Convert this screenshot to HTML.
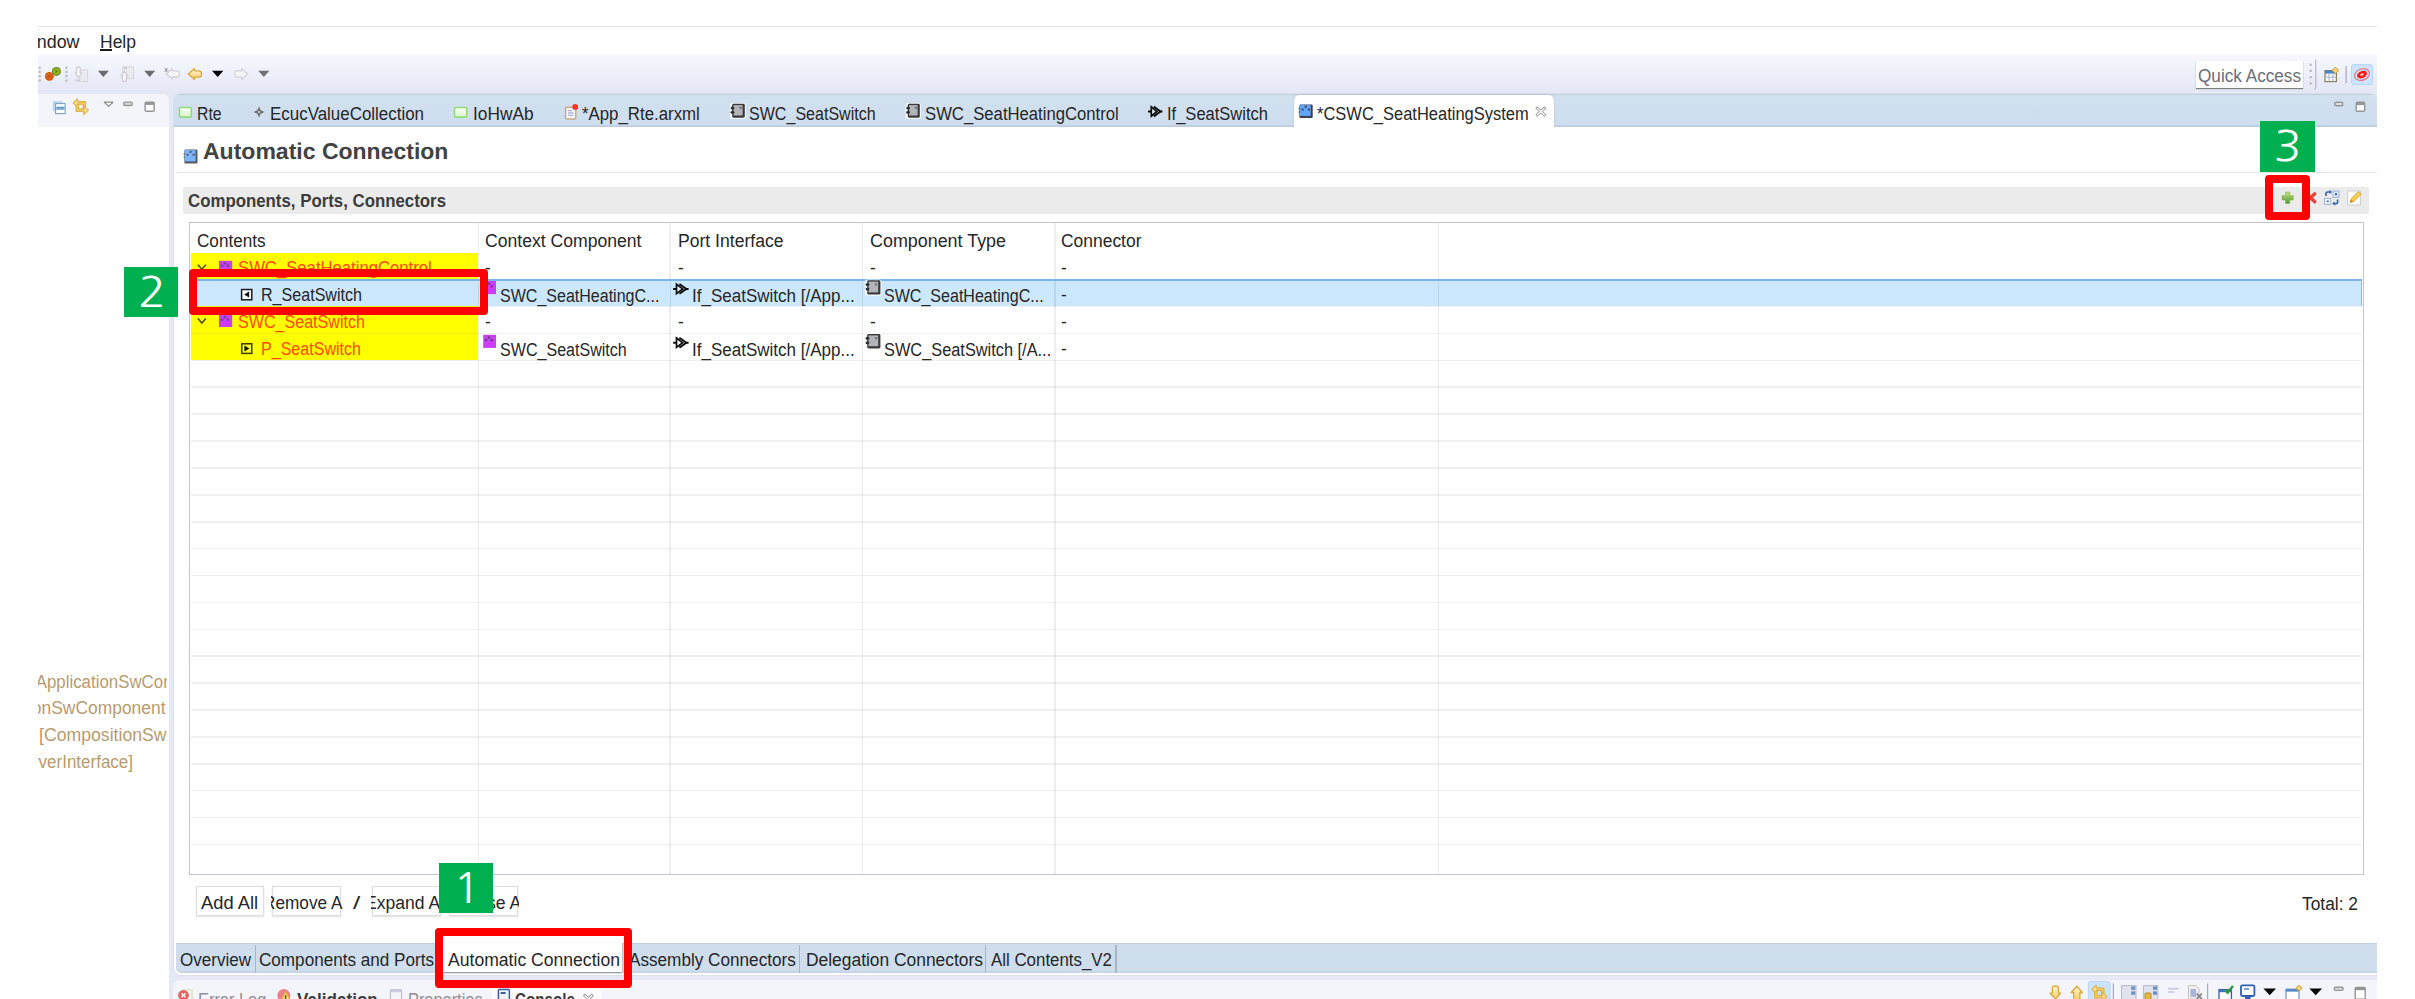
<!DOCTYPE html>
<html lang="en"><head><meta charset="utf-8"><title>Automatic Connection</title>
<style>
html,body{margin:0;padding:0;background:#fff}
body{width:2415px;height:999px;overflow:hidden;font-family:"Liberation Sans",sans-serif}
#root{position:relative;width:2415px;height:999px;overflow:hidden;background:#fff}
#root div,#root span.t,#root svg{position:absolute}
.t{white-space:pre;line-height:1;transform-origin:0 0;display:block}
.clip{overflow:hidden}
.clip .t{position:absolute}
</style></head><body><div id="root">
<div style="left:38.00px;top:25.70px;width:2339.00px;height:1.10px;z-index:1;background:#e4e4e4"></div>
<div style="left:38.00px;top:53.50px;width:2339.00px;height:945.50px;z-index:1;background:#e5e8f6"></div>
<div style="left:38.00px;top:53.50px;width:2339.00px;height:40.70px;z-index:1;background:linear-gradient(#f6f8fd 0%,#eef1fa 45%,#e3e6f4 100%)"></div>
<div style="left:38.00px;top:94.00px;width:131.00px;height:905.00px;z-index:1;background:#fff;border-top-right-radius:7px"></div>
<div style="left:38.00px;top:94.00px;width:131.00px;height:32.50px;z-index:1;background:#f4f5fb;border-top-right-radius:7px"></div>
<div style="left:174.00px;top:94.20px;width:2203.00px;height:881.00px;z-index:1;background:#fff;border-radius:7px 6px 0 7px;box-shadow:0 0 0 0.8px #d9dce8"></div>
<div style="left:174.00px;top:93.90px;width:2203.00px;height:32.80px;z-index:1;background:linear-gradient(#c6cbd9 0,#c9cfdd 2.5%,#d1e0ef 4.5%,#cfdeee 93%,#becce0 96.5%,#becce0 100%);border-radius:6px 6px 0 0"></div>
<div style="left:1294.20px;top:95.20px;width:259.40px;height:32.00px;z-index:2;background:#fff;border-radius:5px 5px 0 0;box-shadow:0 0 1.5px rgba(120,130,160,.55)"></div>
<div style="left:1293.00px;top:126.90px;width:263.00px;height:2.10px;z-index:2;background:#fff"></div>
<div style="left:177.00px;top:171.60px;width:2200.00px;height:1.20px;z-index:1;background:#e5e5e5"></div>
<div style="left:183.30px;top:186.60px;width:2185.70px;height:27.40px;z-index:1;background:#ebebeb;border-radius:2px"></div>
<div style="left:188.80px;top:221.80px;width:2175.40px;height:653.40px;z-index:1;background:#fff;border:1.3px solid #c2c5cd;box-sizing:border-box"></div>
<div style="left:191.40px;top:253.00px;width:287.00px;height:107.18px;z-index:1;background:#ffff00"></div>
<div style="left:191.00px;top:278.89px;width:2171.30px;height:1.60px;z-index:1;background:rgba(120,120,120,.115)"></div>
<div style="left:191.00px;top:305.79px;width:2171.30px;height:1.60px;z-index:1;background:rgba(120,120,120,.115)"></div>
<div style="left:191.00px;top:332.69px;width:2171.30px;height:1.60px;z-index:1;background:rgba(120,120,120,.115)"></div>
<div style="left:191.00px;top:359.58px;width:2171.30px;height:1.60px;z-index:1;background:rgba(120,120,120,.115)"></div>
<div style="left:191.00px;top:386.47px;width:2171.30px;height:1.60px;z-index:1;background:rgba(120,120,120,.115)"></div>
<div style="left:191.00px;top:413.37px;width:2171.30px;height:1.60px;z-index:1;background:rgba(120,120,120,.115)"></div>
<div style="left:191.00px;top:440.26px;width:2171.30px;height:1.60px;z-index:1;background:rgba(120,120,120,.115)"></div>
<div style="left:191.00px;top:467.16px;width:2171.30px;height:1.60px;z-index:1;background:rgba(120,120,120,.115)"></div>
<div style="left:191.00px;top:494.06px;width:2171.30px;height:1.60px;z-index:1;background:rgba(120,120,120,.115)"></div>
<div style="left:191.00px;top:520.95px;width:2171.30px;height:1.60px;z-index:1;background:rgba(120,120,120,.115)"></div>
<div style="left:191.00px;top:547.85px;width:2171.30px;height:1.60px;z-index:1;background:rgba(120,120,120,.115)"></div>
<div style="left:191.00px;top:574.74px;width:2171.30px;height:1.60px;z-index:1;background:rgba(120,120,120,.115)"></div>
<div style="left:191.00px;top:601.63px;width:2171.30px;height:1.60px;z-index:1;background:rgba(120,120,120,.115)"></div>
<div style="left:191.00px;top:628.53px;width:2171.30px;height:1.60px;z-index:1;background:rgba(120,120,120,.115)"></div>
<div style="left:191.00px;top:655.43px;width:2171.30px;height:1.60px;z-index:1;background:rgba(120,120,120,.115)"></div>
<div style="left:191.00px;top:682.32px;width:2171.30px;height:1.60px;z-index:1;background:rgba(120,120,120,.115)"></div>
<div style="left:191.00px;top:709.22px;width:2171.30px;height:1.60px;z-index:1;background:rgba(120,120,120,.115)"></div>
<div style="left:191.00px;top:736.11px;width:2171.30px;height:1.60px;z-index:1;background:rgba(120,120,120,.115)"></div>
<div style="left:191.00px;top:763.01px;width:2171.30px;height:1.60px;z-index:1;background:rgba(120,120,120,.115)"></div>
<div style="left:191.00px;top:789.90px;width:2171.30px;height:1.60px;z-index:1;background:rgba(120,120,120,.115)"></div>
<div style="left:191.00px;top:816.80px;width:2171.30px;height:1.60px;z-index:1;background:rgba(120,120,120,.115)"></div>
<div style="left:191.00px;top:843.69px;width:2171.30px;height:1.60px;z-index:1;background:rgba(120,120,120,.115)"></div>
<div style="left:477.90px;top:223.30px;width:1.60px;height:650.70px;z-index:1;background:rgba(120,120,120,.125)"></div>
<div style="left:669.40px;top:223.30px;width:1.60px;height:650.70px;z-index:1;background:rgba(120,120,120,.125)"></div>
<div style="left:861.70px;top:223.30px;width:1.60px;height:650.70px;z-index:1;background:rgba(120,120,120,.125)"></div>
<div style="left:1054.20px;top:223.30px;width:1.60px;height:650.70px;z-index:1;background:rgba(120,120,120,.125)"></div>
<div style="left:1437.60px;top:223.30px;width:1.60px;height:650.70px;z-index:1;background:rgba(120,120,120,.125)"></div>
<div style="left:191.00px;top:279.09px;width:2171.20px;height:27.40px;z-index:1;background:#cce8ff;border-top:2px solid #7ab5e9;border-right:1.7px solid #86bdec;box-sizing:border-box"></div>
<div style="left:478.10px;top:280.69px;width:1.20px;height:25.90px;z-index:1;background:rgba(120,150,190,.22)"></div>
<div style="left:669.60px;top:280.69px;width:1.20px;height:25.90px;z-index:1;background:rgba(120,150,190,.22)"></div>
<div style="left:861.90px;top:280.69px;width:1.20px;height:25.90px;z-index:1;background:rgba(120,150,190,.22)"></div>
<div style="left:1054.40px;top:280.69px;width:1.20px;height:25.90px;z-index:1;background:rgba(120,150,190,.22)"></div>
<div style="left:1437.80px;top:280.69px;width:1.20px;height:25.90px;z-index:1;background:rgba(120,150,190,.22)"></div>
<div style="left:195.60px;top:885.60px;width:68.60px;height:30.80px;z-index:1;background:#fff;border:1px solid #dedede;box-sizing:border-box;box-shadow:0 1px 1.5px rgba(0,0,0,.13)"></div>
<div style="left:271.80px;top:885.60px;width:69.60px;height:30.80px;z-index:1;background:#fff;border:1px solid #dedede;box-sizing:border-box;box-shadow:0 1px 1.5px rgba(0,0,0,.13)"></div>
<div style="left:372.00px;top:885.60px;width:68.70px;height:30.80px;z-index:1;background:#fff;border:1px solid #dedede;box-sizing:border-box;box-shadow:0 1px 1.5px rgba(0,0,0,.13)"></div>
<div style="left:449.00px;top:885.60px;width:68.80px;height:30.80px;z-index:1;background:#fff;border:1px solid #dedede;box-sizing:border-box;box-shadow:0 1px 1.5px rgba(0,0,0,.13)"></div>
<div style="left:176.00px;top:943.30px;width:2201.00px;height:29.70px;z-index:1;background:linear-gradient(#b9c6d8 0,#cfddec 5%,#cfdeee 90%,#c3d0e2 100%);border-radius:0 0 0 5px"></div>
<div style="left:255.20px;top:944.50px;width:1.20px;height:28.10px;z-index:1;background:#a9b4c6"></div>
<div style="left:799.20px;top:944.50px;width:1.20px;height:28.10px;z-index:1;background:#a9b4c6"></div>
<div style="left:984.70px;top:944.50px;width:1.20px;height:28.10px;z-index:1;background:#a9b4c6"></div>
<div style="left:1115.40px;top:944.50px;width:1.20px;height:28.10px;z-index:1;background:#a9b4c6"></div>
<div style="left:443.40px;top:942.50px;width:178.90px;height:29.90px;z-index:2;background:#fff;box-shadow:0 1px 2px rgba(0,0,0,.35)"></div>
<div style="left:173.30px;top:980.00px;width:2203.70px;height:19.00px;z-index:1;background:#f4f5fb;border-radius:7px 0 0 0"></div>
<div style="left:492.30px;top:988.20px;width:109.70px;height:10.80px;z-index:1;background:#fbfbfe;border-radius:4px 4px 0 0"></div>
<div style="left:2195.50px;top:60.50px;width:107.50px;height:27.80px;z-index:1;background:#fff;box-shadow:0 1px 1px rgba(0,0,0,.45)"></div>
<div style="left:2351.30px;top:64.00px;width:21.50px;height:20.70px;z-index:1;background:#cce4ff;border:1px solid #b3d6fb;border-radius:3px;box-sizing:border-box"></div>
<svg width="2415" height="999" viewBox="0 0 2415 999" style="left:0;top:0;z-index:2"><defs><linearGradient id="gg" x1="0" y1="0" x2="0" y2="1"><stop offset="0" stop-color="#fbfffa"/><stop offset="1" stop-color="#d6f3cb"/></linearGradient><linearGradient id="gy" x1="0" y1="0" x2="0" y2="1"><stop offset="0" stop-color="#fff8d6"/><stop offset="1" stop-color="#f6cf62"/></linearGradient><linearGradient id="gp" x1="0" y1="0" x2="0" y2="1"><stop offset="0" stop-color="#c8e27a"/><stop offset="1" stop-color="#4f9a32"/></linearGradient><radialGradient id="gr"><stop offset="0" stop-color="#b94a10"/><stop offset=".45" stop-color="#e0661c"/><stop offset="1" stop-color="#c4520f"/></radialGradient><radialGradient id="gn"><stop offset="0" stop-color="#a5c42c"/><stop offset=".6" stop-color="#8fb022"/><stop offset="1" stop-color="#5f8212"/></radialGradient></defs>
<rect x="38.6" y="66.6" width="2.2" height="2.2" fill="#bdbcb6"/><rect x="38.6" y="70.8" width="2.2" height="2.2" fill="#bdbcb6"/><rect x="38.6" y="75.0" width="2.2" height="2.2" fill="#bdbcb6"/><rect x="38.6" y="79.5" width="2.2" height="2.2" fill="#bdbcb6"/>
<circle cx="49.4" cy="76.4" r="4.4" fill="url(#gr)"/>
<circle cx="56.4" cy="71.4" r="4.5" fill="url(#gn)"/>
<path d="M55.3 69.6V73.2L58.4 71.4Z" fill="#5a7a10" opacity=".8"/>
<rect x="65.4" y="66.6" width="2.2" height="2.2" fill="#bdbcb6"/><rect x="65.4" y="70.8" width="2.2" height="2.2" fill="#bdbcb6"/><rect x="65.4" y="75.0" width="2.2" height="2.2" fill="#bdbcb6"/><rect x="65.4" y="79.5" width="2.2" height="2.2" fill="#bdbcb6"/>
<rect x="79.8" y="69.9" width="7.8" height="11.6" fill="#e9e9ee" stroke="#d6d6dc" stroke-width="1"/>
<path d="M78.4 77.8L75.2 72.9H76.5V68.9Q76.5 67.0 78.4 67.0Q80.3 67.0 80.3 68.9V72.9H81.6Z" fill="#f6f6f8" stroke="#cfcfd6" stroke-width="1.3" stroke-linejoin="round"/>
<rect x="75.6" y="79.6" width="4.4" height="1.8" fill="#c9c9cf"/>
<path d="M97.9 70.8H108.9L103.4 76.9Z" fill="#6c6c70"/>
<rect x="122.6" y="66.9" width="11" height="11.6" fill="#e9e9ee" stroke="#d6d6dc" stroke-width="1"/>
<rect x="123.4" y="67.4" width="3.6" height="1.6" fill="#c9c9cf"/>
<path d="M124.4 71.2L121.0 75.8H122.4V79.5Q122.4 81.4 124.4 81.4Q126.4 81.4 126.4 79.5V75.8H127.8Z" fill="#f6f6f8" stroke="#cfcfd6" stroke-width="1.3" stroke-linejoin="round"/>
<path d="M144.2 70.8H155.2L149.7 76.9Z" fill="#6c6c70"/>
<path d="M166.2 73.9L172.2 68.8V70.8H177.0Q179.4 70.8 179.4 73.9Q179.4 77.0 177.0 77.0H172.2V79.0Z" fill="#f4f4f6" stroke="#d2d2d8" stroke-width="1.3" stroke-linejoin="round"/>
<path d="M164.6 68.4l3.2 3.2m0-3.2l-3.2 3.2m1.6-3.8v4.4" stroke="#9a9a9a" stroke-width="1"/>
<path d="M188.4 74.0L194.4 68.6V70.8H199.1Q201.5 70.8 201.5 74.0Q201.5 77.2 199.1 77.2H194.4V79.4Z" fill="url(#gy)" stroke="#d9a93e" stroke-width="1.3" stroke-linejoin="round"/>
<path d="M212.0 70.8H223.4L217.7 77.0Z" fill="#000"/>
<path d="M247.7 74.0L241.7 68.6V70.8H237.0Q234.6 70.8 234.6 74.0Q234.6 77.2 237.0 77.2H241.7V79.4Z" fill="#f4f4f6" stroke="#d4d4da" stroke-width="1.3" stroke-linejoin="round"/>
<path d="M258.2 70.8H269.4L263.8 77.0Z" fill="#707074"/>
<rect x="2309.7" y="63.7" width="2.2" height="2.2" fill="#b9b9b9"/><rect x="2309.7" y="69.7" width="2.2" height="2.2" fill="#b9b9b9"/><rect x="2309.7" y="76.1" width="2.2" height="2.2" fill="#b9b9b9"/><rect x="2309.7" y="82.3" width="2.2" height="2.2" fill="#b9b9b9"/>
<path d="M2315.8 59.5V87.5Q2315.8 89 2314.2 89" stroke="#b4b7c8" stroke-width="1.2" fill="none"/>
<rect x="2325" y="70.6" width="11.4" height="11" fill="#f4f6fb" stroke="#8a7d58" stroke-width="1.2"/>
<rect x="2325" y="70.6" width="11.4" height="3" fill="#4f86c6"/>
<path d="M2325 77.2H2336.4M2329 73.6V81.6M2333 73.6V81.6" stroke="#a9b9c9" stroke-width="1"/>
<path d="M2335.4 67.2L2338.6 70.4L2335.4 73.6L2332.2 70.4Z" fill="#f3d57a" stroke="#c79c32" stroke-width="1"/>
<path d="M2346.1 66V83.2" stroke="#a9adbd" stroke-width="1.3"/>
<ellipse cx="2362" cy="74.6" rx="7.6" ry="5.6" fill="none" stroke="#e8707a" stroke-width="1.2" transform="rotate(-18 2362 74.6)"/>
<ellipse cx="2362" cy="74.6" rx="5.2" ry="3.5" fill="#ff1a1a" transform="rotate(-24 2362 74.6)"/>
<ellipse cx="2362" cy="74.6" rx="1.9" ry="1.1" fill="#ffd0d0" transform="rotate(-24 2362 74.6)"/>
<rect x="52.9" y="101.2" width="9.6" height="10" fill="#b9d5ee"/>
<rect x="55.6" y="103.6" width="9.6" height="10" fill="#fff" stroke="#7f9fc9" stroke-width="1.1"/>
<path d="M56.4 107.4H64.6M56.4 109H64.6" stroke="#5c96c9" stroke-width="1.4"/>
<g transform="translate(0 0)"><path d="M72.8 103L77.6 98.6V101.5H85.5V108.6H83V104.3H77.6V107.3Z" fill="#f0c862" stroke="#dcab40" stroke-width=".9" stroke-linejoin="round"/><path d="M88.7 110.2L83.7 105.9V108.9H78.6V104.6H76V111.6H83.7V114.7Z" fill="#f0c862" stroke="#dcab40" stroke-width=".9" stroke-linejoin="round"/><path d="M74.6 103L77 100.8V105.2Z" fill="#fbe9a8"/><path d="M87 110.2L84.6 108V112.4Z" fill="#fbe9a8"/></g>
<path d="M104.4 102.2H112.9L108.6 106.4Z" fill="#fff" stroke="#8f8f8f" stroke-width="1.3" stroke-linejoin="round"/>
<rect x="123.6" y="102.1" width="8.7" height="3.4" rx="1.6" fill="#d9d9d9" stroke="#979797" stroke-width="1.4"/>
<rect x="145.1" y="102.1" width="9.1" height="9.2" rx="1.2" fill="#fff" stroke="#959595" stroke-width="1.4"/><rect x="145.1" y="102.1" width="9.1" height="2.8" fill="#959595"/>
<rect x="179.5" y="107.5" width="11.8" height="9.6" rx="1" fill="url(#gg)" stroke="#92dc78" stroke-width="1.6"/>
<path d="M259 106.4L260.68 110.32L264.6 112L260.68 113.68L259 117.6L257.32 113.68L253.4 112L257.32 110.32Z" fill="#707070"/><circle cx="259" cy="112" r="1.2" fill="#c8c8c8"/>
<rect x="454.5" y="107.5" width="12.3" height="9.6" rx="1" fill="url(#gg)" stroke="#92dc78" stroke-width="1.6"/>
<rect x="565.6" y="107.2" width="10.2" height="11.8" rx="1" fill="#f4f4fc" stroke="#c4b07a" stroke-width="1.5"/>
<path d="M568 110.6H572M568 113H573.4M568 115.4H573.4" stroke="#aab4dc" stroke-width="1.3"/>
<circle cx="575.2" cy="106.9" r="2.9" fill="#ff3030"/>
<rect x="730.0" y="103.0" width="15.8" height="15.9" rx="2" fill="#fff" opacity=".8"/><rect x="732.2" y="103.8" width="12.6" height="13.9" rx="1.4" fill="#3a3a3c"/><rect x="733.5" y="105.1" width="9.1" height="10.4" fill="#b3b3ba"/><ellipse cx="732.5" cy="107.9" rx="1.9" ry="1.5" fill="#2c3030"/><ellipse cx="732.5" cy="112.2" rx="1.9" ry="1.5" fill="#2c3030"/><rect x="739.5" y="106.7" width="2.4" height="2.2" fill="#76767c"/>
<rect x="905.6" y="103.0" width="15.2" height="15.9" rx="2" fill="#fff" opacity=".8"/><rect x="907.8" y="103.8" width="12.0" height="13.9" rx="1.4" fill="#3a3a3c"/><rect x="909.1" y="105.1" width="8.5" height="10.4" fill="#b3b3ba"/><ellipse cx="908.1" cy="107.9" rx="1.9" ry="1.5" fill="#2c3030"/><ellipse cx="908.1" cy="112.2" rx="1.9" ry="1.5" fill="#2c3030"/><rect x="914.8" y="106.7" width="2.4" height="2.2" fill="#76767c"/>
<path d="M1148.0 111.5H1151.4M1159.8 111.5H1162.4" stroke="#0c0c0c" stroke-width="2" fill="none"/><path d="M1151.3 106.8L1156.9 111.5L1151.3 116.2Z" stroke="#0c0c0c" stroke-width="1.7" fill="rgba(255,255,255,.35)" stroke-linejoin="miter"/><path d="M1153.8 106.6L1160.4 111.5L1153.8 116.4" stroke="#0c0c0c" stroke-width="1.9" fill="none" stroke-linejoin="miter"/>
<rect x="1299.4" y="104.5" width="13.3" height="13.4" rx="1.2" fill="#3a4250"/><rect x="1299.8" y="105.1" width="10.9" height="10.8" fill="#62a6ff"/><rect x="1298.6" y="107.8" width="1.4" height="1.6" fill="#3a4250" opacity=".7"/><rect x="1298.6" y="111.2" width="1.4" height="1.6" fill="#3a4250" opacity=".7"/><rect x="1304.6" y="105.7" width="2.3" height="2.1" fill="#3a4250" opacity=".85"/><rect x="1301.4" y="108.5" width="2.3" height="2.1" fill="#3a4250" opacity=".85"/><rect x="1307.7" y="108.5" width="2.3" height="2.1" fill="#3a4250" opacity=".85"/>
<path d="M1537.4 108.4L1544.4 114.8M1544.4 108.4L1537.4 114.8" stroke="#909090" stroke-width="2.9" stroke-linecap="square"/><path d="M1537.4 108.4L1544.4 114.8M1544.4 108.4L1537.4 114.8" stroke="#fff" stroke-width="1.3" stroke-linecap="square"/>
<rect x="2334.6" y="102.3" width="8.4" height="3.4" rx="1.6" fill="#d9d9d9" stroke="#979797" stroke-width="1.4"/>
<rect x="2356.2" y="102.3" width="8.5" height="9.0" rx="1.2" fill="#fff" stroke="#959595" stroke-width="1.4"/><rect x="2356.2" y="102.3" width="8.5" height="2.8" fill="#959595"/>
<rect x="184.4" y="149.5" width="13.1" height="13.9" rx="1.2" fill="#565b63"/><rect x="184.8" y="150.1" width="10.7" height="11.3" fill="#7ab6ff"/><rect x="183.6" y="153.0" width="1.4" height="1.6" fill="#565b63" opacity=".7"/><rect x="183.6" y="156.4" width="1.4" height="1.6" fill="#565b63" opacity=".7"/><rect x="189.5" y="150.8" width="2.3" height="2.1" fill="#565b63" opacity=".85"/><rect x="186.4" y="153.7" width="2.3" height="2.1" fill="#565b63" opacity=".85"/><rect x="192.5" y="153.7" width="2.3" height="2.1" fill="#565b63" opacity=".85"/>
<path d="M2285.5 192.2H2289.7V195.7H2293.2V199.9H2289.7V203.4H2285.5V199.9H2282V195.7H2285.5Z" fill="url(#gp)" stroke="#78ae44" stroke-width=".6" stroke-linejoin="round"/>
<path d="M2306.4 193.8L2314.8 201.8M2314.8 193.8L2306.4 201.8" stroke="#e0433d" stroke-width="3.3" stroke-linecap="round"/>
<rect x="2333" y="191" width="6" height="6.4" fill="#dfe9f6" stroke="#9eb2d2" stroke-width="1"/>
<rect x="2335" y="193" width="2" height="2.4" fill="#3f6fb4"/>
<rect x="2324.4" y="198.4" width="6.4" height="6" fill="#f4f8fd" stroke="#9eb2d2" stroke-width="1"/>
<rect x="2326.6" y="200.6" width="2.2" height="1.6" fill="#3f6fb4"/>
<path d="M2326 196V193.4Q2326 192 2327.6 192H2330.4" stroke="#3765b0" stroke-width="1.7" fill="none"/><path d="M2329.6 189.8L2332 192L2329.6 194.2Z" fill="#3765b0"/>
<path d="M2337.6 199.6V202.2Q2337.6 203.6 2336 203.6H2334" stroke="#3765b0" stroke-width="1.7" fill="none"/><path d="M2334.6 201.4L2332.2 203.6L2334.6 205.8Z" fill="#3765b0"/>
<rect x="2347.6" y="191" width="13" height="14" rx="1" fill="#fff" stroke="#cfcfcf" stroke-width="1.1"/>
<path d="M2350.2 202.6L2351.4 198.6L2358.4 191.4L2361.2 194L2354.2 201.2Z" fill="#f7cf52" stroke="#d9a032" stroke-width=".9" stroke-linejoin="round"/>
<path d="M2350.2 202.6L2351.2 199.4L2353.4 201.6Z" fill="#c98038"/>
<path d="M197.9 264.7L201.9 269.2L205.8 264.7" stroke="#4b4b10" stroke-width="1.5" fill="none"/>
<rect x="219.0" y="260.8" width="13.2" height="12.4" fill="#cb3cfb"/><rect x="223.8" y="262.3" width="2.3" height="2.1" fill="#5a4a6a" opacity=".85"/><rect x="220.9" y="264.8" width="2.3" height="2.1" fill="#5a4a6a" opacity=".85"/><rect x="226.7" y="264.8" width="2.3" height="2.1" fill="#5a4a6a" opacity=".85"/>
<path d="M197.9 318.5L201.9 323.0L205.8 318.5" stroke="#4b4b10" stroke-width="1.5" fill="none"/>
<rect x="219.0" y="314.6" width="13.2" height="12.4" fill="#cb3cfb"/><rect x="223.8" y="316.1" width="2.3" height="2.1" fill="#5a4a6a" opacity=".85"/><rect x="220.9" y="318.6" width="2.3" height="2.1" fill="#5a4a6a" opacity=".85"/><rect x="226.7" y="318.6" width="2.3" height="2.1" fill="#5a4a6a" opacity=".85"/>
<rect x="241.6" y="289.5" width="10.2" height="10.3" fill="#f4faff" stroke="#1c1c1c" stroke-width="1.5"/><path d="M249.1 291.6V297.6L244.1 294.6Z" fill="#111"/>
<rect x="241.8" y="343.8" width="10.0" height="9.6" fill="#ffff20" stroke="#3c3c00" stroke-width="1.5"/><path d="M244.4 345.6V351.6L249.4 348.6Z" fill="#111"/>
<rect x="483.2" y="281.0" width="12.8" height="13.1" fill="#cb3cfb"/><rect x="487.8" y="282.6" width="2.3" height="2.1" fill="#5a3a6a" opacity=".85"/><rect x="485.0" y="285.2" width="2.3" height="2.1" fill="#5a3a6a" opacity=".85"/><rect x="490.6" y="285.2" width="2.3" height="2.1" fill="#5a3a6a" opacity=".85"/>
<path d="M673.2 288.9H676.6M685.8 288.9H688.6" stroke="#0c0c0c" stroke-width="2" fill="none"/><path d="M676.5 284.2L682.7 288.9L676.5 293.6Z" stroke="#0c0c0c" stroke-width="1.7" fill="rgba(255,255,255,.35)" stroke-linejoin="miter"/><path d="M679.4 284.0L686.4 288.9L679.4 293.8" stroke="#0c0c0c" stroke-width="1.9" fill="none" stroke-linejoin="miter"/>
<rect x="865.0" y="279.5" width="16.4" height="16.3" rx="2" fill="#fff" opacity=".8"/><rect x="867.2" y="280.3" width="13.2" height="14.3" rx="1.4" fill="#3a3a3c"/><rect x="868.5" y="281.6" width="9.7" height="10.8" fill="#b3b3ba"/><ellipse cx="867.5" cy="284.5" rx="1.9" ry="1.5" fill="#2c3030"/><ellipse cx="867.5" cy="288.9" rx="1.9" ry="1.5" fill="#2c3030"/><rect x="874.9" y="283.3" width="2.4" height="2.2" fill="#76767c"/>
<rect x="483.2" y="334.8" width="12.8" height="13.1" fill="#cb3cfb"/><rect x="487.8" y="336.4" width="2.3" height="2.1" fill="#5a3a6a" opacity=".85"/><rect x="485.0" y="339.0" width="2.3" height="2.1" fill="#5a3a6a" opacity=".85"/><rect x="490.6" y="339.0" width="2.3" height="2.1" fill="#5a3a6a" opacity=".85"/>
<path d="M673.2 342.7H676.6M685.8 342.7H688.6" stroke="#0c0c0c" stroke-width="2" fill="none"/><path d="M676.5 338.0L682.7 342.7L676.5 347.4Z" stroke="#0c0c0c" stroke-width="1.7" fill="rgba(255,255,255,.35)" stroke-linejoin="miter"/><path d="M679.4 337.8L686.4 342.7L679.4 347.6" stroke="#0c0c0c" stroke-width="1.9" fill="none" stroke-linejoin="miter"/>
<rect x="865.0" y="333.3" width="16.4" height="16.3" rx="2" fill="#fff" opacity=".8"/><rect x="867.2" y="334.1" width="13.2" height="14.3" rx="1.4" fill="#3a3a3c"/><rect x="868.5" y="335.4" width="9.7" height="10.8" fill="#b3b3ba"/><ellipse cx="867.5" cy="338.3" rx="1.9" ry="1.5" fill="#2c3030"/><ellipse cx="867.5" cy="342.7" rx="1.9" ry="1.5" fill="#2c3030"/><rect x="874.9" y="337.1" width="2.4" height="2.2" fill="#76767c"/>
<rect x="183" y="990" width="9" height="11" fill="#fffdf2" stroke="#d8cfa8" stroke-width="1"/>
<circle cx="183.5" cy="995.3" r="5.4" fill="#e46464"/><path d="M181.5 993.3l4 4m0-4l-4 4" stroke="#fff" stroke-width="1.5"/>
<circle cx="283.8" cy="995.6" r="6.5" fill="#ee8088"/>
<path d="M285.6 991.4L291.6 1003H279.6Z" fill="#f9de7e" stroke="#e0aa3a" stroke-width="1"/>
<path d="M285.6 995V1000" stroke="#6a5a2a" stroke-width="1.5"/>
<rect x="390.4" y="989.8" width="11.2" height="12" fill="#f3f3f8" stroke="#b9bccb" stroke-width="1.1"/><rect x="390.4" y="989.8" width="11.2" height="2.4" fill="#c9ccda"/>
<rect x="498.4" y="989.6" width="11" height="12" rx="1" fill="#eef3fb" stroke="#3e5f9a" stroke-width="1.5"/><rect x="500.6" y="992" width="5" height="2" fill="#3e5f9a"/>
<path d="M585.0 995.6L591.8 1002.0M591.8 995.6L585.0 1002.0" stroke="#909090" stroke-width="2.9" stroke-linecap="square"/><path d="M585.0 995.6L591.8 1002.0M591.8 995.6L585.0 1002.0" stroke="#fff" stroke-width="1.3" stroke-linecap="square"/>
<path d="M2055.4 999.0L2050.0 993.1H2052.4V987.9Q2052.4 986.0 2055.4 986.0Q2058.4 986.0 2058.4 987.9V993.1H2060.8Z" fill="url(#gy)" stroke="#d9a93e" stroke-width="1.3" stroke-linejoin="round"/>
<path d="M2076.8 986.2L2071.2 992.5H2073.7V998.1Q2073.7 1000.0 2076.8 1000.0Q2079.9 1000.0 2079.9 998.1V992.5H2082.4Z" fill="url(#gy)" stroke="#d9a93e" stroke-width="1.3" stroke-linejoin="round"/>
<rect x="2088.4" y="981.4" width="21.6" height="20" rx="2.5" fill="#cce4ff" stroke="#b3d6fb" stroke-width="1"/>
<g transform="translate(2018.6 886.4)"><path d="M72.8 103L77.6 98.6V101.5H85.5V108.6H83V104.3H77.6V107.3Z" fill="#f0c862" stroke="#dcab40" stroke-width=".9" stroke-linejoin="round"/><path d="M88.7 110.2L83.7 105.9V108.9H78.6V104.6H76V111.6H83.7V114.7Z" fill="#f0c862" stroke="#dcab40" stroke-width=".9" stroke-linejoin="round"/><path d="M74.6 103L77 100.8V105.2Z" fill="#fbe9a8"/><path d="M87 110.2L84.6 108V112.4Z" fill="#fbe9a8"/></g>
<path d="M2113.4 983.4V999" stroke="#a9adbd" stroke-width="1.3"/>
<rect x="2121.6" y="985.6" width="14.4" height="14" fill="#dfe3ee" stroke="#b4b9ca" stroke-width="1"/>
<rect x="2131.2" y="986.4" width="4" height="3.4" fill="#6d8fc6"/><rect x="2131.2" y="991.4" width="4" height="3.4" fill="#6d8fc6"/>
<rect x="2143.4" y="985.6" width="14.4" height="14" fill="#dfe3ee" stroke="#b4b9ca" stroke-width="1"/>
<rect x="2153.0" y="986.4" width="4" height="3.4" fill="#6d8fc6"/><rect x="2153.0" y="991.4" width="4" height="3.4" fill="#6d8fc6"/>
<rect x="2145" y="993" width="6" height="7" rx="1" fill="#e7b83c" stroke="#b98a1c" stroke-width="1"/>
<path d="M2168 988.6H2178.4M2168 992H2174" stroke="#c3c9e3" stroke-width="1.6"/>
<path d="M2188.4 985.6H2196L2199 988.6V999H2188.4Z" fill="#eeeef4" stroke="#c9c4b0" stroke-width="1"/><rect x="2190.4" y="989" width="5.6" height="8" fill="#a9b4d6"/>
<path d="M2196.6 993.6l5.2 5.2m0-5.2l-5.2 5.2" stroke="#7f7f7f" stroke-width="1.6"/>
<path d="M2207.6 983.4V999" stroke="#a9adbd" stroke-width="1.3"/>
<rect x="2219" y="989.6" width="12.4" height="11" fill="#fff" stroke="#3e5f9a" stroke-width="1.3"/><rect x="2219" y="989.6" width="12.4" height="2.6" fill="#3e73c0"/>
<path d="M2225 989.8L2227.6 992.6L2233 986" stroke="#2f9a3c" stroke-width="2.4" fill="none"/>
<rect x="2241" y="985.4" width="13.4" height="10.6" rx="1.4" fill="#fff" stroke="#2f5fb4" stroke-width="1.8"/><rect x="2244" y="988" width="5" height="2" fill="#7f9fd0"/><rect x="2245" y="996.6" width="5.6" height="2.4" fill="#2f5fb4"/>
<path d="M2263.4 988.4H2276.0L2269.7 995.2Z" fill="#000"/>
<rect x="2286" y="989.2" width="13" height="11" fill="#fff" stroke="#6f8fc0" stroke-width="1.2"/><rect x="2286" y="989.2" width="13" height="2.4" fill="#4f86c6"/>
<path d="M2299 985.2L2302 988.2L2299 991.2L2296 988.2Z" fill="#f3d57a" stroke="#c79c32" stroke-width="1"/>
<path d="M2309.4 988.4H2322.0L2315.7 995.2Z" fill="#000"/>
<rect x="2334.2" y="987.2" width="9.0" height="3.2" rx="1.6" fill="#d9d9d9" stroke="#979797" stroke-width="1.4"/>
<rect x="2355.2" y="987.4" width="10.0" height="11.8" rx="1.2" fill="#fff" stroke="#959595" stroke-width="1.4"/><rect x="2355.2" y="987.4" width="10.0" height="2.8" fill="#959595"/></svg>
<span class=t style="left:100.2px;top:32.76px;font-size:18px;color:#262626;transform:scaleX(0.9722);z-index:3;">Help</span>
<span class=t style="left:197.2px;top:104.76px;font-size:18px;color:#262626;transform:scaleX(0.8781);z-index:3;">Rte</span>
<span class=t style="left:269.9px;top:104.76px;font-size:18px;color:#262626;transform:scaleX(0.9404);z-index:3;">EcucValueCollection</span>
<span class=t style="left:472.6px;top:104.76px;font-size:18px;color:#262626;transform:scaleX(0.9614);z-index:3;">IoHwAb</span>
<span class=t style="left:581.9px;top:104.76px;font-size:18px;color:#262626;transform:scaleX(0.9345);z-index:3;">*App_Rte.arxml</span>
<span class=t style="left:749.2px;top:104.76px;font-size:18px;color:#262626;transform:scaleX(0.8919);z-index:3;">SWC_SeatSwitch</span>
<span class=t style="left:924.8px;top:104.76px;font-size:18px;color:#262626;transform:scaleX(0.9268);z-index:3;">SWC_SeatHeatingControl</span>
<span class=t style="left:1166.6px;top:104.76px;font-size:18px;color:#262626;transform:scaleX(0.9177);z-index:3;">If_SeatSwitch</span>
<span class=t style="left:1316.6px;top:104.76px;font-size:18px;color:#262626;transform:scaleX(0.9161);z-index:3;">*CSWC_SeatHeatingSystem</span>
<span class=t style="left:202.6px;top:140.10px;font-size:22.8px;color:#424242;transform:scaleX(1.0092);z-index:3;font-weight:700;text-rendering:geometricPrecision;">Automatic Connection</span>
<span class=t style="left:188.0px;top:192.06px;font-size:18px;color:#3c3c3c;transform:scaleX(0.9347);z-index:3;font-weight:700;">Components, Ports, Connectors</span>
<span class=t style="left:197.4px;top:231.76px;font-size:18px;color:#262626;transform:scaleX(0.9508);z-index:3;">Contents</span>
<span class=t style="left:485.4px;top:231.76px;font-size:18px;color:#262626;transform:scaleX(0.9776);z-index:3;">Context Component</span>
<span class=t style="left:677.5px;top:231.76px;font-size:18px;color:#262626;transform:scaleX(0.9763);z-index:3;">Port Interface</span>
<span class=t style="left:869.5px;top:231.76px;font-size:18px;color:#262626;transform:scaleX(0.9944);z-index:3;">Component Type</span>
<span class=t style="left:1061.3px;top:231.76px;font-size:18px;color:#262626;transform:scaleX(0.9691);z-index:3;">Connector</span>
<span class=t style="left:237.6px;top:259.36px;font-size:18px;color:#ff4c00;transform:scaleX(0.9268);z-index:3;">SWC_SeatHeatingControl</span>
<span class=t style="left:260.7px;top:286.26px;font-size:18px;color:#262626;transform:scaleX(0.8933);z-index:3;">R_SeatSwitch</span>
<span class=t style="left:237.6px;top:313.15px;font-size:18px;color:#ff4c00;transform:scaleX(0.8940);z-index:3;">SWC_SeatSwitch</span>
<span class=t style="left:260.7px;top:340.05px;font-size:18px;color:#ff4c00;transform:scaleX(0.8924);z-index:3;">P_SeatSwitch</span>
<span class=t style="left:485.2px;top:259.36px;font-size:18px;color:#262626;transform:scaleX(0.9600);z-index:3;">-</span>
<span class=t style="left:677.5px;top:259.36px;font-size:18px;color:#262626;transform:scaleX(0.9600);z-index:3;">-</span>
<span class=t style="left:869.5px;top:259.36px;font-size:18px;color:#262626;transform:scaleX(0.9600);z-index:3;">-</span>
<span class=t style="left:1061.3px;top:259.36px;font-size:18px;color:#262626;transform:scaleX(0.9600);z-index:3;">-</span>
<span class=t style="left:485.2px;top:313.15px;font-size:18px;color:#262626;transform:scaleX(0.9600);z-index:3;">-</span>
<span class=t style="left:677.5px;top:313.15px;font-size:18px;color:#262626;transform:scaleX(0.9600);z-index:3;">-</span>
<span class=t style="left:869.5px;top:313.15px;font-size:18px;color:#262626;transform:scaleX(0.9600);z-index:3;">-</span>
<span class=t style="left:1061.3px;top:313.15px;font-size:18px;color:#262626;transform:scaleX(0.9600);z-index:3;">-</span>
<span class=t style="left:1061.3px;top:286.26px;font-size:18px;color:#262626;transform:scaleX(0.9600);z-index:3;">-</span>
<span class=t style="left:1061.3px;top:340.05px;font-size:18px;color:#262626;transform:scaleX(0.9600);z-index:3;">-</span>
<span class=t style="left:499.7px;top:287.26px;font-size:18px;color:#262626;transform:scaleX(0.8901);z-index:3;">SWC_SeatHeatingC...</span>
<span class=t style="left:691.9px;top:287.26px;font-size:18px;color:#262626;transform:scaleX(0.9454);z-index:3;">If_SeatSwitch [/App...</span>
<span class=t style="left:883.7px;top:287.26px;font-size:18px;color:#262626;transform:scaleX(0.8912);z-index:3;">SWC_SeatHeatingC...</span>
<span class=t style="left:499.7px;top:341.05px;font-size:18px;color:#262626;transform:scaleX(0.8926);z-index:3;">SWC_SeatSwitch</span>
<span class=t style="left:691.9px;top:341.05px;font-size:18px;color:#262626;transform:scaleX(0.9454);z-index:3;">If_SeatSwitch [/App...</span>
<span class=t style="left:883.7px;top:341.05px;font-size:18px;color:#262626;transform:scaleX(0.9084);z-index:3;">SWC_SeatSwitch [/A...</span>
<span class=t style="left:201.4px;top:893.56px;font-size:18px;color:#262626;transform:scaleX(1.0188);z-index:3;">Add All</span>
<span class=t style="left:353.0px;top:893.56px;font-size:18px;color:#262626;transform:scaleX(1.4555);z-index:3;">/</span>
<span class=t style="left:2302.3px;top:895.16px;font-size:18px;color:#262626;transform:scaleX(0.9647);z-index:3;">Total: 2</span>
<span class=t style="left:179.9px;top:950.56px;font-size:18px;color:#262626;transform:scaleX(0.9465);z-index:3;">Overview</span>
<span class=t style="left:259.3px;top:950.56px;font-size:18px;color:#262626;transform:scaleX(0.9505);z-index:3;">Components and Ports</span>
<span class=t style="left:447.8px;top:950.56px;font-size:18px;color:#262626;transform:scaleX(0.9767);z-index:3;">Automatic Connection</span>
<span class=t style="left:629.3px;top:950.56px;font-size:18px;color:#262626;transform:scaleX(0.9527);z-index:3;">Assembly Connectors</span>
<span class=t style="left:805.5px;top:950.56px;font-size:18px;color:#262626;transform:scaleX(0.9666);z-index:3;">Delegation Connectors</span>
<span class=t style="left:991.0px;top:950.56px;font-size:18px;color:#262626;transform:scaleX(0.9374);z-index:3;">All Contents_V2</span>
<span class=t style="left:2197.8px;top:67.06px;font-size:18px;color:#6d6d78;transform:scaleX(0.9533);z-index:3;">Quick Access</span>
<div class=clip style="left:38.0px;top:30.0px;width:52.0px;height:24.0px;z-index:3"><span class=t style="left:-22.5px;top:2.76px;font-size:18px;color:#262626;transform:scaleX(0.9917);">Window</span></div>
<div class=clip style="left:270.6px;top:887.0px;width:72.2px;height:28.4px;z-index:3"><span class=t style="left:-7.5px;top:6.56px;font-size:18px;color:#262626;transform:scaleX(0.9556);">Remove All</span></div>
<div class=clip style="left:370.8px;top:887.0px;width:71.2px;height:28.4px;z-index:3"><span class=t style="left:-5.9px;top:6.56px;font-size:18px;color:#262626;transform:scaleX(0.9758);">Expand All</span></div>
<div class=clip style="left:447.8px;top:887.0px;width:71.6px;height:28.4px;z-index:3"><span class=t style="left:-10.4px;top:6.56px;font-size:18px;color:#262626;transform:scaleX(0.9781);">Collapse All</span></div>
<div class=clip style="left:38.0px;top:670.0px;width:128.8px;height:25.0px;z-index:3"><span class=t style="left:-7.5px;top:2.76px;font-size:18px;color:#b79b6e;transform:scaleX(0.9367);">[ApplicationSwComponentType]</span></div>
<div class=clip style="left:38.0px;top:697.0px;width:128.8px;height:25.0px;z-index:3"><span class=t style="left:-71.6px;top:2.26px;font-size:18px;color:#b79b6e;transform:scaleX(0.9679);">ApplicationSwComponent</span></div>
<div class=clip style="left:38.0px;top:723.0px;width:128.8px;height:26.0px;z-index:3"><span class=t style="left:1.4px;top:2.76px;font-size:18px;color:#b79b6e;transform:scaleX(0.9808);">[CompositionSwComponentType]</span></div>
<div class=clip style="left:38.0px;top:750.0px;width:128.8px;height:26.0px;z-index:3"><span class=t style="left:-73.8px;top:2.76px;font-size:18px;color:#b79b6e;transform:scaleX(0.9437);">[ClientServerInterface]</span></div>
<div class=clip style="left:173.0px;top:980.0px;width:2204.0px;height:19.0px;z-index:3"><span class=t style="left:25.3px;top:11.06px;font-size:18px;color:#8f8f95;transform:scaleX(0.9101);">Error Log</span></div>
<div class=clip style="left:173.0px;top:980.0px;width:2204.0px;height:19.0px;z-index:3"><span class=t style="left:123.6px;top:11.06px;font-size:18px;color:#3c3c3c;transform:scaleX(0.9502);font-weight:700;">Validation</span></div>
<div class=clip style="left:173.0px;top:980.0px;width:2204.0px;height:19.0px;z-index:3"><span class=t style="left:235.4px;top:11.06px;font-size:18px;color:#8f8f95;transform:scaleX(0.9092);">Properties</span></div>
<div class=clip style="left:173.0px;top:980.0px;width:2204.0px;height:19.0px;z-index:3"><span class=t style="left:342.0px;top:11.06px;font-size:18px;color:#3c3c3c;transform:scaleX(0.8449);font-weight:700;">Console</span></div>
<div style="left:100.4px;top:49.4px;width:11.6px;height:1.2px;background:#1b1b1b;z-index:3"></div>
<div style="left:189.20px;top:269.30px;width:298.60px;height:45.40px;z-index:9;border:8px solid #ff0000;border-radius:4px;box-sizing:border-box"></div>
<div style="left:435.30px;top:928.30px;width:196.70px;height:59.40px;z-index:9;border:8px solid #ff0000;border-radius:4px;box-sizing:border-box"></div>
<div style="left:2265.00px;top:175.00px;width:45.00px;height:45.00px;z-index:9;border:8px solid #ff0000;border-radius:4px;box-sizing:border-box"></div>
<div style="left:123.90px;top:267.00px;width:54.10px;height:49.90px;z-index:10;background:#00b050"><span class=t style="left:0.8px;right:-0.8px;top:4.6px;color:#fff;font-family:'NanumGothic','Noto Sans CJK KR',sans-serif;font-weight:400;font-size:41.2px;line-height:1;text-align:center;transform:scaleX(1.11);transform-origin:50% 0;">2</span></div>
<div style="left:439.00px;top:863.00px;width:53.80px;height:49.80px;z-index:10;background:#00b050"><span class=t style="left:0.8px;right:-0.8px;top:4.9px;color:#fff;font-family:'NanumGothic','Noto Sans CJK KR',sans-serif;font-weight:400;font-size:41.2px;line-height:1;text-align:center;transform:scaleX(1.11);transform-origin:50% 0;">1</span></div>
<div style="left:2260.00px;top:121.00px;width:55.00px;height:51.00px;z-index:10;background:#00b050"><span class=t style="left:0.4px;right:-0.4px;top:5.2px;color:#fff;font-family:'NanumGothic','Noto Sans CJK KR',sans-serif;font-weight:400;font-size:41.2px;line-height:1;text-align:center;transform:scaleX(1.11);transform-origin:50% 0;">3</span></div>
<div style="left:0.00px;top:0.00px;width:38.00px;height:999.00px;z-index:8;background:#fff"></div>
<div style="left:2377.00px;top:0.00px;width:38.00px;height:999.00px;z-index:8;background:#fff"></div>
</div></body></html>
